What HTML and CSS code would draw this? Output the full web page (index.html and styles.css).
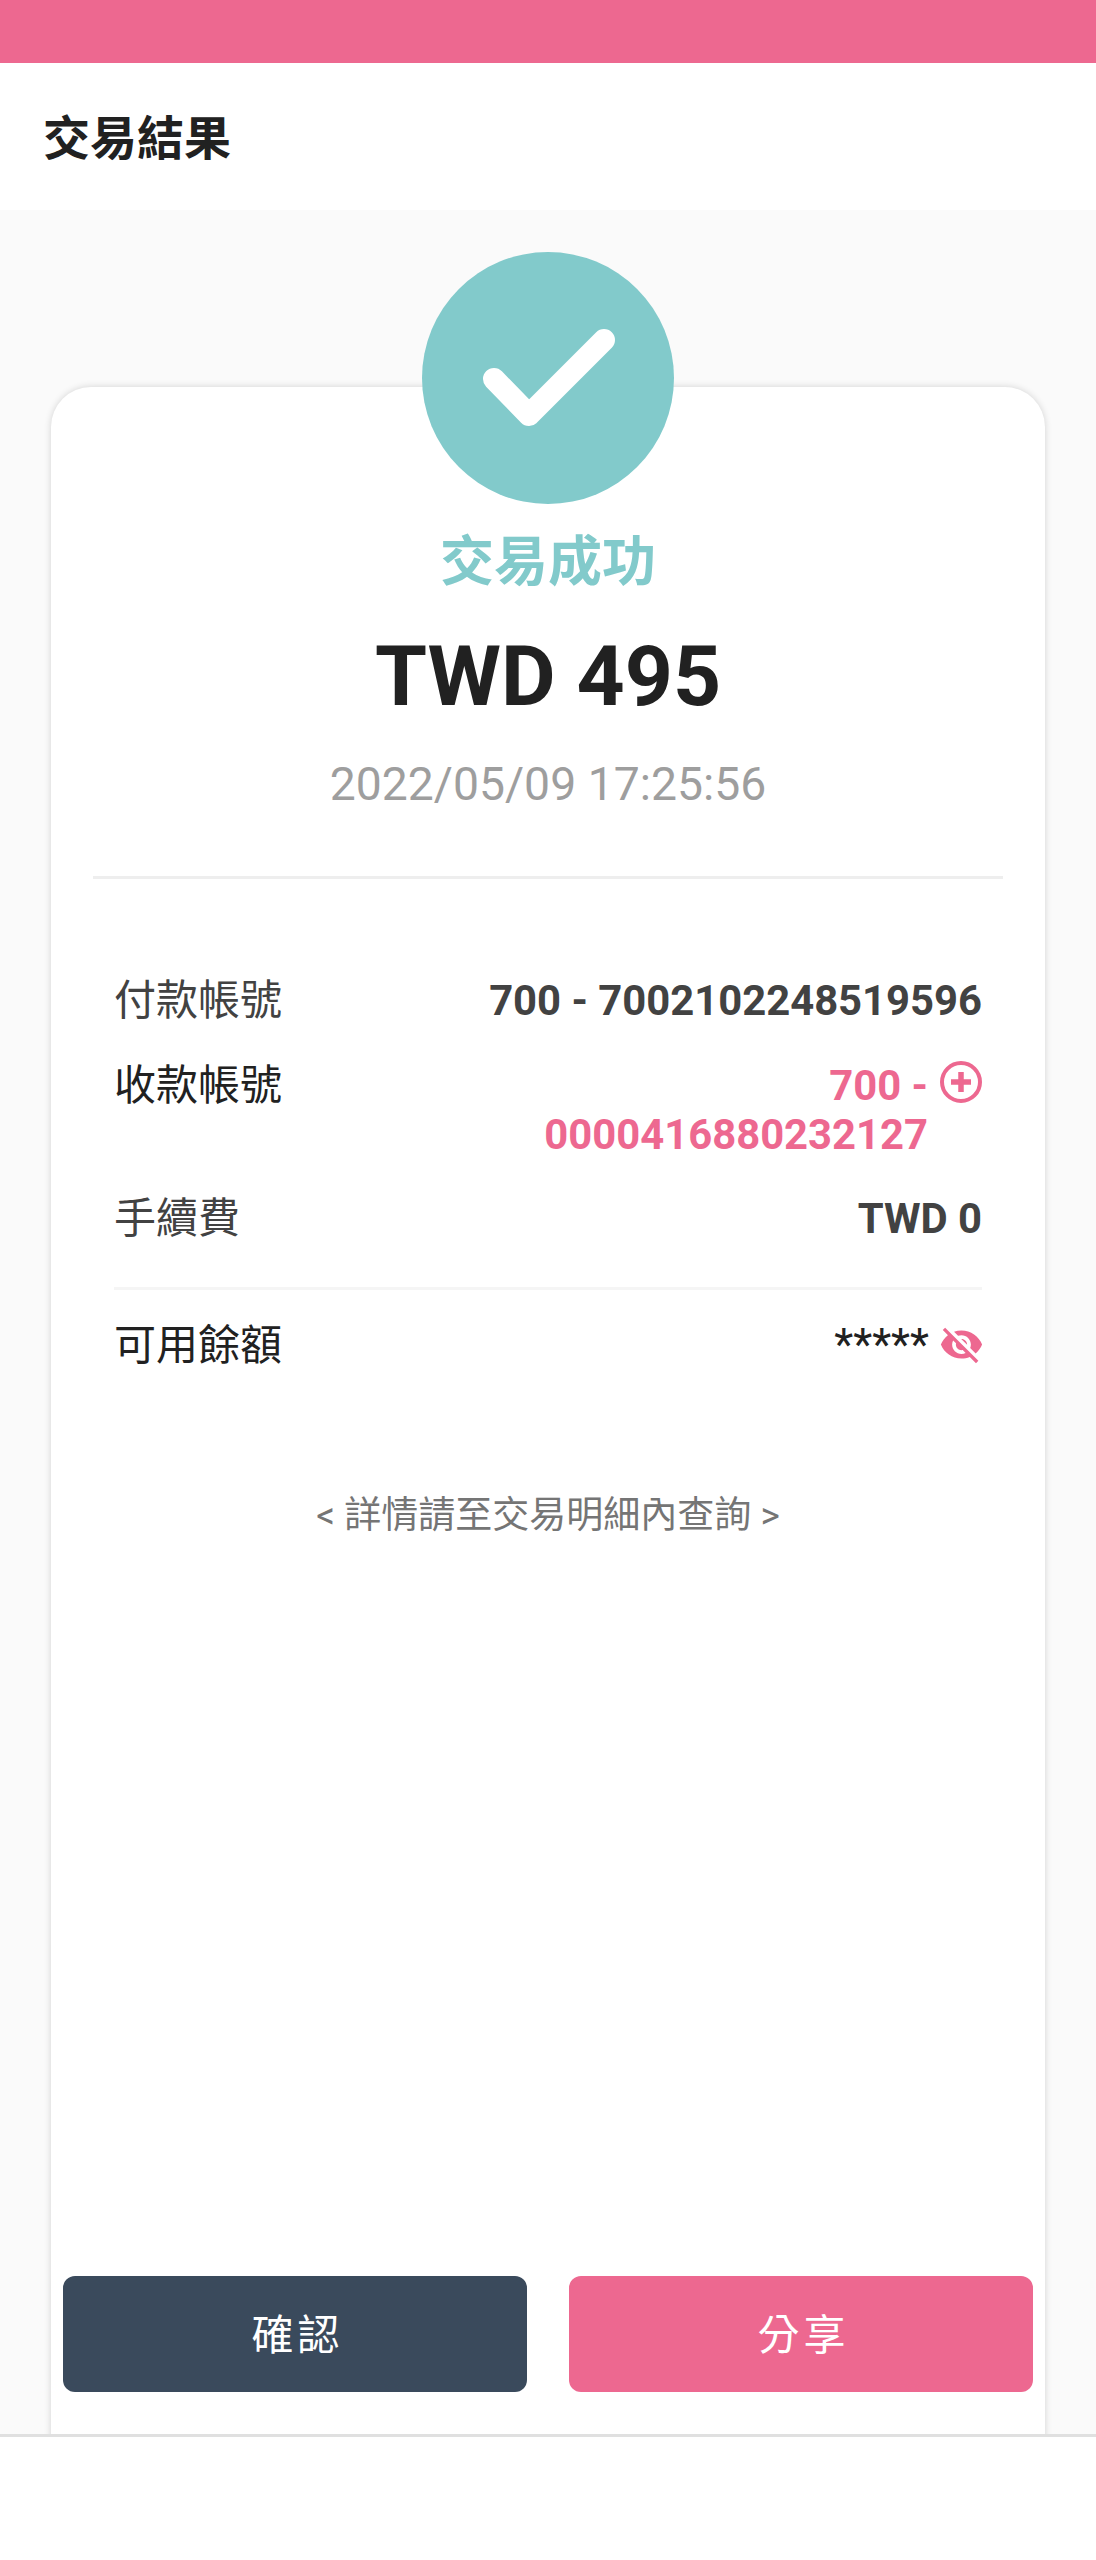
FILE: index.html
```html
<!DOCTYPE html>
<html lang="zh-Hant">
<head>
    <meta charset="UTF-8">
    <meta name="viewport" content="width=device-width, initial-scale=1.0">
    <title>交易結果</title>
    <link rel="stylesheet" href="styles.css">
</head>

<body>
    <div class="status-bar"></div>

    <header class="top-bar">
        <h1>交易結果</h1>
    </header>

    <main class="content">
        <section class="card">
            <!-- Success badge sits half over the card edge -->
            <div class="badge">
                <svg width="252" height="252" viewBox="0 0 252 252">
                    <path d="M72 127 L107 163 L182 88" fill="none" stroke="#fff" stroke-width="22" stroke-linecap="round" stroke-linejoin="round"/>
                </svg>
            </div>

            <p class="status">交易成功</p>
            <p class="amount">TWD 495</p>
            <p class="date">2022/05/09 17:25:56</p>

            <div class="divider"></div>

            <div class="details">
                <div class="row row-first">
                    <span class="label label-soft">付款帳號</span>
                    <span class="value">700 - 7002102248519596</span>
                </div>
                <div class="row row-account">
                    <span class="label">收款帳號</span>
                    <span class="value-group">
                        <span class="value value-link">700 - 0000416880232127</span>
                        <svg class="icon" width="42" height="42" viewBox="0 0 42 42">
                            <circle cx="21" cy="21" r="19" fill="none" stroke="#ED6890" stroke-width="4"/>
                            <path d="M21 11 V31 M11 21 H31" fill="none" stroke="#ED6890" stroke-width="5.5"/>
                        </svg>
                    </span>
                </div>
                <div class="row row-fee">
                    <span class="label label-soft">手續費</span>
                    <span class="value">TWD 0</span>
                </div>
                <div class="row row-balance">
                    <span class="label">可用餘額</span>
                    <span class="value-group value-group-center">
                        <span class="masked">*****</span>
                        <svg class="icon icon-eye" width="45" height="45" viewBox="0 0 24 24">
                            <path fill="#ED6890" d="M12 7c2.76 0 5 2.24 5 5 0 .65-.13 1.26-.36 1.83l2.92 2.92c1.51-1.26 2.7-2.89 3.43-4.75-1.73-4.39-6-7.5-11-7.5-1.4 0-2.74.25-3.98.7l2.16 2.16C10.74 7.13 11.35 7 12 7zM2 4.27l2.28 2.28.46.46C3.08 8.3 1.78 10.02 1 12c1.73 4.39 6 7.5 11 7.5 1.55 0 3.03-.3 4.38-.84l.42.42L19.73 22 21 20.73 3.27 3 2 4.27zM7.53 9.8l1.55 1.55c-.05.21-.08.43-.08.65 0 1.66 1.34 3 3 3 .22 0 .44-.03.65-.08l1.55 1.55c-.67.33-1.41.53-2.2.53-2.76 0-5-2.24-5-5 0-.79.2-1.53.53-2.2zm4.31-.78l3.15 3.15.02-.16c0-1.66-1.34-3-3-3l-.17.01z"/>
                        </svg>
                    </span>
                </div>
            </div>

            <p class="hint">&lt; 詳情請至交易明細內查詢 &gt;</p>

            <div class="actions">
                <button type="button" class="btn btn-dark">確認</button>
                <button type="button" class="btn btn-pink">分享</button>
            </div>
        </section>
    </main>

    <div class="bottom-bar"></div>
</body>

</html>
```

FILE: styles.css
```css
/* General Styles */
* {
    box-sizing: border-box;
}

body {
    font-family: Roboto, "Noto Sans CJK TC", sans-serif;
    margin: 0;
    height: 2560px;
    display: flex;
    flex-direction: column;
    background-color: #fff;
    color: #212121;
    overflow: hidden;
}

p {
    margin: 0;
}

.status-bar {
    height: 63px;
    flex-shrink: 0;
    background-color: #ED6890;
}

.top-bar {
    height: 147px;
    flex-shrink: 0;
    padding: 4px 0 0 43px;
    display: flex;
    align-items: center;
    background-color: #fff;
}

.top-bar h1 {
    margin: 0;
    font-size: 47px;
    line-height: 56px;
    font-weight: 700;
}

.content {
    flex: 1;
    min-height: 0;
    padding: 177px 51px 0;
    background-color: #FAFAFA;
    overflow: hidden;
}

/* Card runs off the bottom, under the bottom bar */
.card {
    display: flow-root;
    height: 2100px;
    padding: 0 12px;
    background-color: #fff;
    border-radius: 40px 40px 0 0;
    box-shadow: 0 0 7px rgba(0, 0, 0, 0.16);
    text-align: center;
}

.badge {
    width: 252px;
    height: 252px;
    margin: -135px auto 0;
    border-radius: 50%;
    background-color: #82CACB;
}

.status {
    margin-top: 26px;
    font-size: 54px;
    line-height: 66px;
    font-weight: 700;
    color: #82CACB;
}

.amount {
    margin-top: 31px;
    font-size: 84px;
    line-height: 100px;
    font-weight: 700;
}

.date {
    margin-top: 29px;
    font-size: 46.3px;
    line-height: 56px;
    color: #9E9E9E;
}

.divider {
    height: 3px;
    margin: 64px 30px 0;
    background-color: #EEEEEE;
}

.details {
    margin: 97px 30px 0;
    padding: 0 21px;
}

.row {
    display: flex;
    justify-content: space-between;
    align-items: flex-start;
    font-size: 42px;
    line-height: 49px;
}

.row-account {
    margin-top: 36px;
}

.row-fee {
    margin-top: 35px;
    padding-bottom: 44px;
    border-bottom: 3px solid #F5F5F5;
}

.row-balance {
    margin-top: 31px;
}

.label {
    flex-shrink: 0;
    color: #212121;
}

.label-soft {
    color: #424242;
}

.value {
    font-size: 41.8px;
    font-weight: 700;
    color: #424242;
    text-align: right;
}

.value-link {
    max-width: 400px;
    color: #ED6890;
}

.value-group {
    display: flex;
    align-items: flex-start;
    gap: 12px;
}

.value-group-center {
    align-items: center;
}

.masked {
    font-size: 44px;
    font-weight: 400;
    color: #212121;
}

.icon {
    flex-shrink: 0;
}

.icon-eye {
    margin: -2px -2px 0 -2px;
}

.hint {
    margin-top: 122px;
    font-size: 37px;
    line-height: 48px;
    color: #757575;
}

.actions {
    display: flex;
    gap: 42px;
    margin-top: 736px;
}

.btn {
    flex: 1;
    height: 116px;
    padding: 0 0 5px 5px;
    border: none;
    border-radius: 12px;
    color: #fff;
    font-family: inherit;
    font-size: 42px;
    letter-spacing: 4px;
    cursor: pointer;
}

.btn-dark {
    background-color: #3A4A5C;
}

.btn-pink {
    background-color: #ED6890;
}

.bottom-bar {
    height: 126px;
    flex-shrink: 0;
    border-top: 3px solid #E0E0E0;
    background-color: #fff;
}
```
